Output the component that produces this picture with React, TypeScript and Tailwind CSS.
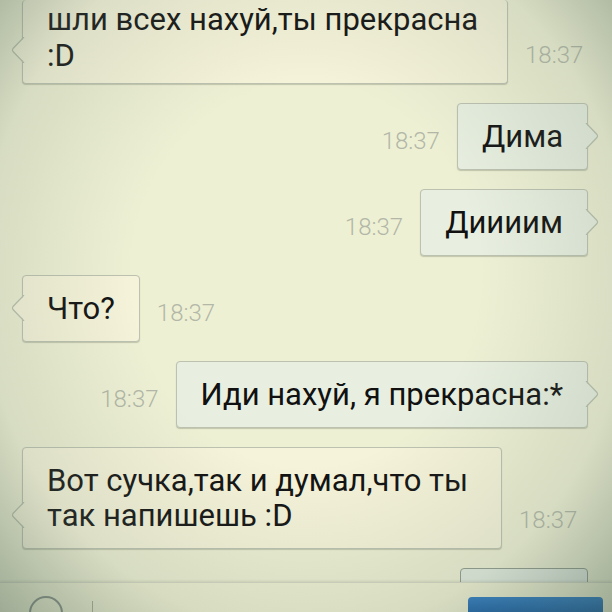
type Msg = {
  out: boolean;
  lines: string[];
  width?: string;
  first?: boolean;
};

const messages: Msg[] = [
  { out: false, lines: ["шли всех нахуй,ты прекрасна", ":D"], width: "w-[486px]", first: true },
  { out: true, lines: ["Дима"] },
  { out: true, lines: ["Диииим"] },
  { out: false, lines: ["Что?"] },
  { out: true, lines: ["Иди нахуй, я прекрасна:*"] },
  { out: false, lines: ["Вот сучка,так и думал,что ты", "так напишешь :D"], width: "w-[480px]" },
];

function Tail({ out }: { out: boolean }) {
  // little chevron that sticks out of the bubble side
  return out ? (
    <svg
      width="14"
      height="26"
      viewBox="0 0 14 26"
      className="absolute right-[-12px] bottom-[20px]"
    >
      <polygon points="0,0 12,12 12,14 0,26" fill="#e8efe0" />
      <path d="M1,0 L12,11.5 Q13,13 12,14.5 L1,26" fill="none" stroke="#b9bfae" strokeWidth="1.2" />
    </svg>
  ) : (
    <svg
      width="14"
      height="26"
      viewBox="0 0 14 26"
      className="absolute left-[-12px] bottom-[20px]"
    >
      <polygon points="14,0 2,12 2,14 14,26" fill="#f5f3d9" />
      <path d="M13,0 L2,11.5 Q1,13 2,14.5 L13,26" fill="none" stroke="#b9bfae" strokeWidth="1.2" />
    </svg>
  );
}

function Time() {
  return (
    <span className="mb-[17px] shrink-0 text-[24px] font-light leading-[24px] text-[#b2b7a7]">
      18:37
    </span>
  );
}

function Bubble({ m }: { m: Msg }) {
  return (
    <div
      className={`relative shrink-0 rounded-[4px] border border-[#bcc1b0] px-[24px] text-[31px] leading-[35px] text-[#111111] shadow-[0_1px_1px_rgba(60,70,50,0.25)] ${
        m.out ? "bg-[#e8efe0]" : "bg-[#f5f3d9]"
      } ${m.width ?? ""} ${m.first ? "border-t-0 pt-[2px] pb-[10px]" : "py-[15px]"}`}
    >
      {m.lines.map((l, i) => (
        <div key={i} className={`whitespace-nowrap ${m.first && i === 0 ? "leading-[36px]" : ""}`}>
          {l}
        </div>
      ))}
      <Tail out={m.out} />
    </div>
  );
}

export default function App() {
  return (
    <div
      className="relative flex h-[612px] w-[612px] flex-col overflow-hidden bg-[#eef0d4]"
      style={{ fontFamily: "Roboto, 'Noto Sans', sans-serif" }}
    >
      <div className="flex flex-1 flex-col gap-[19px] overflow-hidden pl-[22px] pr-[24px]">
        <div className="flex flex-col gap-[19px]">
          {messages.map((m, i) => (
            <div key={i} className={`flex items-end gap-[17px] ${m.out ? "justify-end" : ""}`}>
              {m.out && <Time />}
              <Bubble m={m} />
              {!m.out && <Time />}
            </div>
          ))}
          <div className="flex justify-end">
            <div className="h-[40px] w-[128px] rounded-[4px] border border-[#8f9a8c] bg-[#e3ece0]" />
          </div>
        </div>
      </div>

      <div className="relative flex h-[30px] shrink-0 items-end border-t border-[#d3d6c2] bg-[#eff0d3] pl-[29px] pr-[9px] shadow-[0_-1px_2px_rgba(80,90,70,0.15)]">
        <div className="mb-[-18px] h-[34px] w-[34px] rounded-full border-2 border-[#8a9289]" />
        <div className="ml-[29px] h-[11px] w-px bg-[#a9ae9c]" />
        <div className="ml-auto h-[15px] w-[135px] rounded-t-[4px] bg-gradient-to-b from-[#2a79c4] to-[#155fab]" />
      </div>

      {/* photo filter vignette */}
      <div className="pointer-events-none absolute inset-0 bg-[radial-gradient(ellipse_at_50%_45%,rgba(255,255,240,0)_40%,rgba(120,140,120,0.2)_75%,rgba(70,95,80,0.48)_100%)]" />
    </div>
  );
}
